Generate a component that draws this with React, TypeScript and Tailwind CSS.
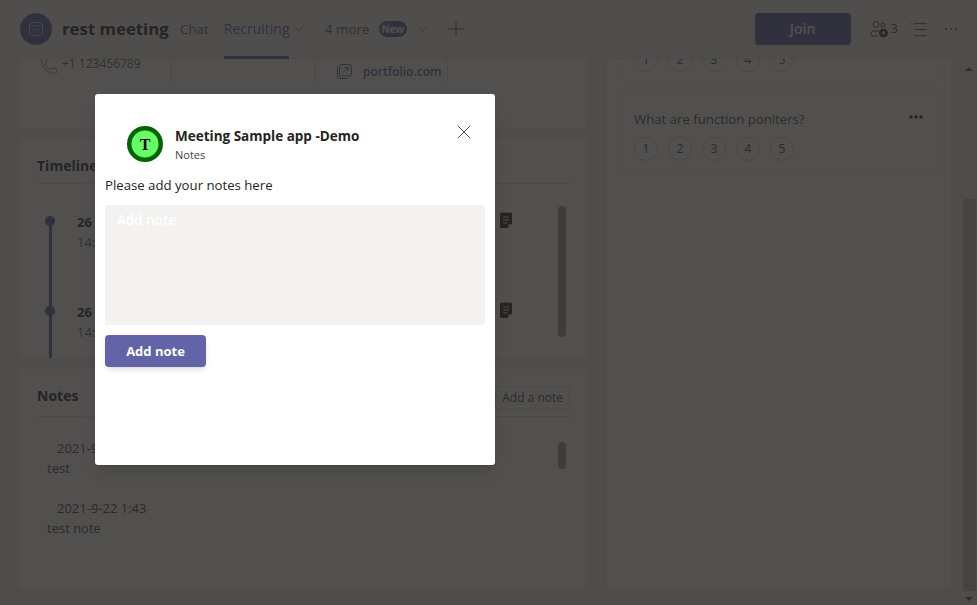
import { X, ChevronDown, Plus, Phone, List } from "lucide-react";

const font = "font-['Open_Sans','Noto_Sans',sans-serif]";

const Rating = () => (
  <div className="flex gap-[10px]">
    {[1, 2, 3, 4, 5].map((n) => (
      <div
        key={n}
        className="flex h-6 w-6 items-center justify-center rounded-full border border-[#d1d1d1] text-xs text-[#424242]"
      >
        {n}
      </div>
    ))}
  </div>
);

const Dots = ({ r, color }: { r: number; color: string }) => (
  <svg width="14" height="4" viewBox="0 0 14 4" fill={color}>
    <circle cx="2" cy="2" r={r} />
    <circle cx="7" cy="2" r={r} />
    <circle cx="12" cy="2" r={r} />
  </svg>
);

const NoteIcon = () => (
  <svg width="12" height="16" viewBox="0 0 12 16" className="text-[#242424]">
    <path d="M1 1h10a1 1 0 0 1 1 1v9.500L7.500 16H1a1 1 0 0 1-1-1V2a1 1 0 0 1 1-1z" fill="currentColor" />
    <path d="M2 0v1M4 0v1M6 0v1M8 0v1M10 0v1" stroke="currentColor" />
    <path d="M3 5h6M3 8h6M3 11h4" stroke="#f5f5f5" />
    <path d="M8.500 15.500v-3h3z" fill="#f5f5f5" />
  </svg>
);

const TimelineItem = () => (
  <div className="flex h-[90px]">
    <div className="relative flex w-[26px] justify-center">
      <div className="absolute top-0 bottom-0 w-[3px] bg-[#6264a7]" />
      <div className="relative mt-[-5px] h-[10px] w-[10px] shrink-0 rounded-full bg-[#6264a7]" />
    </div>
    <div className="ml-[14px] w-[423px] text-[13px] leading-[20px]">
      <div className="mt-[-9px] font-bold text-[#242424]">26</div>
      <div className="text-[#616161]">14:</div>
    </div>
    <div className="mt-[-9px]">
      <NoteIcon />
    </div>
  </div>
);

const Card = ({ className, children }: { className: string; children: React.ReactNode }) => (
  <div className={"rounded-[3px] bg-white " + className}>{children}</div>
);

const Behind = () => (
  <div className="flex h-full flex-col bg-[#f0f0f0]">
    <header className="flex h-[59px] shrink-0 items-center border-b border-[#e0e0e0] bg-[#f5f5f5] pl-5">
      <div className="flex h-8 w-8 items-center justify-center rounded-full bg-[#6264a7]">
        <svg width="14" height="14" viewBox="0 0 14 14" fill="none" stroke="#fff" strokeOpacity="0.6">
          <rect x="0.500" y="0.500" width="13" height="13" rx="2" />
          <path d="M1 4h12M3.500 7.500h1.500M6.200 7.500h1.500M9 7.500h1.500M3.500 10h1.500M6.200 10h1.500" />
        </svg>
      </div>
      <div className="ml-[10px] text-[16.800px] font-bold text-[#242424]">rest meeting</div>
      <div className="ml-[11px] w-[29px] text-[13.500px] text-[#616161]">Chat</div>
      <div className="relative ml-[15px] flex h-full w-[65px] items-center text-sm text-[#6264a7]">
        Recruiting
        <div className="absolute right-0 bottom-[-1px] left-0 h-[3px] bg-[#6264a7]" />
      </div>
      <ChevronDown size={16} strokeWidth={1} className="ml-[2px] text-[#616161]" />
      <div className="ml-[18px] w-[44px] text-[13.500px] whitespace-nowrap text-[#616161]">4 more</div>
      <div className="ml-[10px] flex h-4 w-7 items-center justify-center rounded-full bg-[#6264a7] text-[10px] font-bold text-white">
        New
      </div>
      <ChevronDown size={16} strokeWidth={1} className="ml-2 text-[#616161]" />
      <Plus size={26} strokeWidth={0.750} className="ml-3 text-[#424242]" />
      <div className="ml-auto flex h-8 w-[96px] items-center justify-center rounded bg-[#6264a7] text-sm font-semibold text-white shadow">
        Join
      </div>
      <svg width="20" height="18" viewBox="0 0 20 18" fill="none" stroke="#424242" className="ml-[19px]">
        <circle cx="6" cy="4.500" r="3" />
        <circle cx="13" cy="5" r="2" />
        <path d="M9 11H4c-2 0-3 1-3 2.500S2 16 4 16h4" />
        <circle cx="13.500" cy="13" r="4" fill="#424242" />
        <path d="M11.500 13h4M13.500 11v4" stroke="#f5f5f5" />
      </svg>
      <div className="ml-px text-[13px] text-[#424242]">3</div>
      <List size={21} strokeWidth={1} className="ml-[10px] text-[#424242]" />
      <div className="mr-[19px] ml-[15px]">
        <Dots r={1} color="#424242" />
      </div>
    </header>

    <main className="flex min-h-0 flex-1 overflow-hidden">
      <div className="ml-5 flex w-[567px] shrink-0 flex-col">
        <Card className="flex h-[70px] shrink-0 text-xs">
          <div className="flex w-[151px] gap-1 pl-[20px] text-[#616161]">
            <Phone size={18} strokeWidth={0.900} className="mt-[-2px]" />
            <span className="mt-[-3px] leading-[16px]">+1 123456789</span>
          </div>
          <div className="h-6 w-[145px] border-x border-[#e0e0e0]" />
          <div className="flex h-6 w-[132px] items-start gap-[11px] border-r border-[#e0e0e0] pl-[21px] font-semibold text-[#6264a7]">
            <svg width="15" height="15" viewBox="0 0 15 15" fill="none" stroke="currentColor" className="mt-[5px] shrink-0">
              <rect x="2.500" y="0.500" width="12" height="11.500" rx="2" />
              <path d="M0.500 3v9a2.500 2.500 0 0 0 2.500 2.500h8M6 8.500l5-5M7.500 3.500H11V7" />
            </svg>
            <span className="mt-[5px]">portfolio.com</span>
          </div>
        </Card>

        <Card className="relative mt-[9px] h-[220px] shrink-0 overflow-hidden pt-[18px] pl-[17px]">
          <div className="h-[28px] w-[535px] border-b border-[#e0e0e0] text-sm leading-[20px] font-bold text-[#242424]">
            Timeline
          </div>
          <div className="mt-[37px]">
            <TimelineItem />
            <TimelineItem />
          </div>
          <div className="absolute top-[68px] left-[538px] h-[131px] w-2 rounded-full bg-[#9e9e9e]" />
        </Card>

        <Card className="relative mt-[11px] h-[219px] shrink-0 pt-[17px] pl-[17px]">
          <div className="flex h-[31px] w-[535px] items-start justify-between border-b border-[#e0e0e0]">
            <div className="text-sm leading-[20px] font-bold text-[#242424]">Notes</div>
            <div className="mr-[2px] flex h-6 items-center rounded-[3px] border border-[#e0e0e0] px-[6px] text-xs text-[#424242]">
              Add a note
            </div>
          </div>
          <div className="text-[13px] leading-[20px] text-[#424242]">
            <div className="mt-[21px] pl-[20px]">2021-9</div>
            <div className="pl-[10px]">test</div>
            <div className="mt-5 pl-[20px]">2021-9-22 1:43</div>
            <div className="pl-[10px]">test note</div>
          </div>
          <div className="absolute top-[73px] left-[538px] h-[27px] w-2 rounded-full bg-[#9e9e9e]" />
        </Card>
      </div>

      <div className="ml-5 h-[529px] w-[344px] shrink-0 bg-white px-[10px]">
        <div className="flex h-[22px] flex-col rounded-b-[3px] border-x border-b border-[#f5f5f5] pl-4">
          <div className="mt-[-11px]">
            <Rating />
          </div>
        </div>
        <div className="mt-[11px] h-[81px] rounded-[3px] border border-[#f5f5f5] pt-4 pr-[17px] pl-4">
          <div className="flex items-center justify-between text-[13.200px] leading-[20px] text-[#424242]">
            What are function poniters?
            <div className="mt-[-4px]">
              <Dots r={1.700} color="#242424" />
            </div>
          </div>
          <div className="mt-2">
            <Rating />
          </div>
        </div>
      </div>

      <div className="relative flex-1 bg-[#f0f0f0]">
        <div className="absolute top-[140px] right-[1px] bottom-[14px] w-[13px] bg-[#c1c1c1]" />
        <div className="absolute top-2 right-1 h-0 w-0 border-x-[4px] border-b-[4px] border-x-transparent border-b-[#505050]" />
        <div className="absolute right-1 bottom-1 h-0 w-0 border-x-[4px] border-t-[4px] border-x-transparent border-t-[#505050]" />
      </div>
    </main>
  </div>
);

export default function App() {
  return (
    <div className={"relative h-[605px] w-[977px] overflow-hidden " + font}>
      <Behind />
      <div className="absolute inset-0 bg-[#252423]/80" />
      <div className="absolute top-[94px] left-[95px] flex h-[371px] w-[400px] flex-col rounded-[3px] bg-white px-[10px] shadow-lg">
        <div className="mt-[32px] flex items-start pl-[22px]">
          <svg width="36" height="36" viewBox="0 0 36 36" className="shrink-0">
            <circle cx="18" cy="18" r="18" fill="#006400" />
            <circle cx="18" cy="18" r="13.500" fill="#66ff66" />
            <text x="18" y="23.500" textAnchor="middle" fontSize="16" fontWeight="700" fontFamily="Liberation Serif" fill="#000">
              T
            </text>
          </svg>
          <div className="mt-px ml-[12px]">
            <div className="text-[13.500px] leading-[19px] font-bold text-[#242424]">Meeting Sample app -Demo</div>
            <div className="text-[11px] leading-[18px] text-[#424242]">Notes</div>
          </div>
        </div>
        <X size={24} strokeWidth={0.800} className="absolute top-[26px] right-[19px] text-[#242424]" />
        <div className="mt-[12px] text-[13.200px] leading-[18px] text-[#242424]">Please add your notes here</div>
        <div className="mt-[11px] h-[120px] w-full rounded-[3px] bg-[#f3f2f1] px-3 py-[5px] text-[13.500px] leading-[20px] font-semibold text-white">
          Add note
        </div>
        <div className="mt-[10px] flex h-8 w-[101px] items-center justify-center rounded-[4px] bg-[#6264a7] pt-px text-[13px] font-bold text-white shadow-md">
          Add note
        </div>
      </div>
    </div>
  );
}
